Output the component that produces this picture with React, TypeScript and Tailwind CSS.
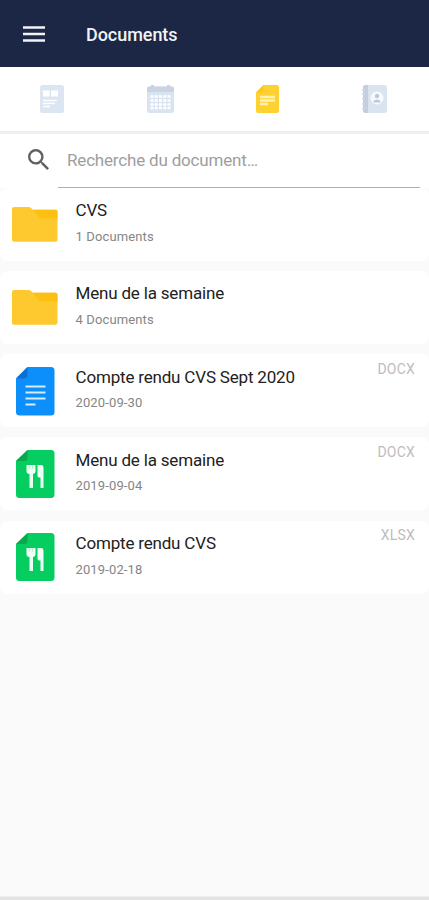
type DocType = "folder" | "doc" | "menu";

type Entry = {
  title: string;
  detail: string;
  type: DocType;
  ext?: string;
};

const entries: Entry[] = [
  { title: "CVS", detail: "1 Documents", type: "folder" },
  { title: "Menu de la semaine", detail: "4 Documents", type: "folder" },
  { title: "Compte rendu CVS Sept 2020", detail: "2020-09-30", type: "doc", ext: "DOCX" },
  { title: "Menu de la semaine", detail: "2019-09-04", type: "menu", ext: "DOCX" },
  { title: "Compte rendu CVS", detail: "2019-02-18", type: "menu", ext: "XLSX" },
];

function FolderIcon() {
  return (
    <svg width="46" height="35" viewBox="0 0 46 35">
      <path d="M2 0h14.500q1.500 0 2.500 1l2 1.800h22.500a2 2 0 0 1 2 2v28a2 2 0 0 1-2 2H2a2 2 0 0 1-2-2V2a2 2 0 0 1 2-2z" fill="#fec92e" />
      <path d="M21 2.800h22.500a2 2 0 0 1 2 2V11.500H30q-2 0-3.500-1.500z" fill="#fdbf12" />
    </svg>
  );
}

function DocIcon() {
  return (
    <svg width="39" height="49" viewBox="0 0 39 49">
      <path d="M11.500 0H35a3.500 3.500 0 0 1 3.500 3.500v41.500a3.500 3.500 0 0 1-3.500 3.500H3.500A3.500 3.500 0 0 1 0 45V11.500z" fill="#0d8ffb" />
      <path d="M11.500 0v8a3.500 3.500 0 0 1-3.500 3.500H0z" fill="#0b70cf" />
      <path d="M9.500 19.500h20M9.500 25.500h20M9.500 31.500h20M9.500 37.500h10" stroke="#d5ecff" strokeWidth="2" />
    </svg>
  );
}

function MenuIcon() {
  return (
    <svg width="39" height="49" viewBox="0 0 39 49">
      <path d="M11.500 0H35a3.500 3.500 0 0 1 3.500 3.500v41a3.500 3.500 0 0 1-3.500 3.500H3.500A3.500 3.500 0 0 1 0 44.500V11z" fill="#06cd5f" />
      <path d="M11.500 0v7.500A3.500 3.500 0 0 1 8 11H0z" fill="#08a94f" />
      <path d="M10.500 15h9v6.500q0 2-2.500 2.500v14h-3.500v-14q-3-.5-3-2.500z" fill="#eefff5" />
      <path d="M13.500 15.500v3.500M16.500 15.500v3.500" stroke="#b9f3d2" strokeWidth="1" />
      <path d="M21.500 15h3.500q2.500 0 2.500 3v20h-3V27.500h-1.500q-1.500 0-1.500-2z" fill="#eefff5" />
    </svg>
  );
}

const icons = {
  folder: <FolderIcon />,
  doc: <DocIcon />,
  menu: <MenuIcon />,
};

function NewsTab() {
  return (
    <svg width="24" height="28" viewBox="0 0 24 28">
      <rect width="24" height="28" rx="2.500" fill="#dce5f2" />
      <path d="M3 5.500h6.500v6H3zM11 5.500h7v6h-7z" fill="#fff" />
      <path d="M3 15.500h14M3 18.500h12M3 21.500h7" stroke="#fff" strokeWidth="1.500" />
    </svg>
  );
}

function CalendarTab() {
  return (
    <svg width="27" height="28" viewBox="0 0 27 28">
      <rect y="1.500" width="27" height="26.500" rx="2.500" fill="#dae4f1" />
      <path d="M0 7V4q0-2.500 2.500-2.500h22Q27 1.500 27 4v3z" fill="#c9d3e2" />
      <path d="M5.500 0v4M21.500 0v4" stroke="#c9d3e2" strokeWidth="3" />
      <path
        d="M3.500 11.500h20M3.500 15.500h20M3.500 19.500h20M3.500 23h20"
        stroke="#fff"
        strokeWidth="2.500"
        strokeDasharray="3 1.250"
      />
    </svg>
  );
}

function NoteTab() {
  return (
    <svg width="23" height="28" viewBox="0 0 23 28">
      <path d="M7.500 0h13A2.500 2.500 0 0 1 23 2.500v23a2.500 2.500 0 0 1-2.500 2.500h-18A2.500 2.500 0 0 1 0 25.500V7.500z" fill="#fdd12f" />
      <path d="M7.500 0v5A2.500 2.500 0 0 1 5 7.500H0z" fill="#f9c922" />
      <path d="M4 12h15M4 15.500h15M4 19h8" stroke="#fff0b5" strokeWidth="2.600" />
    </svg>
  );
}

function ContactTab() {
  return (
    <svg width="25" height="28" viewBox="0 0 25 28">
      <rect x="1" width="24" height="28" rx="2.500" fill="#dae4f1" />
      <path d="M3.500 0H6v28H3.500A2.500 2.500 0 0 1 1 25.500v-23A2.500 2.500 0 0 1 3.500 0z" fill="#c3cfdf" />
      <path d="M0 4.500h3M0 9h3M0 14h3M0 19h3M0 23.500h3" stroke="#cfd9e6" strokeWidth="1.500" />
      <circle cx="15" cy="13" r="6.500" fill="#f7fafd" />
      <circle cx="15" cy="11" r="2.200" fill="#bdc9da" />
      <path d="M11.300 17.500q.5-3 3.700-3t3.700 3z" fill="#bdc9da" />
    </svg>
  );
}

function EntryRow({ entry }: { entry: Entry }) {
  return (
    <li className="flex h-[73px] rounded-lg bg-white pr-[14px]">
      <div className="flex w-[70px] shrink-0 items-center justify-center pt-px">{icons[entry.type]}</div>
      <div className="flex-1 pt-[11.500px] pl-[5.500px]">
        <p className="text-[17px] leading-[22px] tracking-[-0.18px] text-[#212121]">{entry.title}</p>
        <p className="mt-[6.600px] text-[13px] leading-[18px] tracking-[0.13px] text-[#858585]">{entry.detail}</p>
      </div>
      {entry.ext && <span className="pt-[5.500px] text-sm leading-[18px] tracking-[0.2px] text-[#bdbdbd]">{entry.ext}</span>}
    </li>
  );
}

export default function App() {
  return (
    <div className="flex h-[900px] w-[429px] flex-col overflow-hidden bg-[#fafafa] font-['Roboto',sans-serif]">
      <header className="flex h-[67px] shrink-0 items-center bg-[#1c2745] pl-[23px] text-[#f1f3f7]">
        <button aria-label="Menu" className="w-[63px]">
          <svg width="22" height="16" viewBox="0 0 22 16">
            <path d="M0 1.500h22M0 8h22M0 14.500h22" stroke="currentColor" strokeWidth="2.400" />
          </svg>
        </button>
        <h1 className="pt-0.5 text-lg font-medium tracking-[-0.05px]">Documents</h1>
      </header>

      <nav className="flex h-[67px] shrink-0 items-center justify-between border-b-[3px] border-[#efefef] bg-white pr-[42px] pl-10">
        <NewsTab />
        <CalendarTab />
        <NoteTab />
        <ContactTab />
      </nav>

      <div className="flex h-[53.500px] shrink-0 items-stretch bg-white pr-[9px]">
        <div className="flex w-[58px] items-center pb-[3px] pl-7">
          <svg width="21" height="21" viewBox="3 3 17.500 17.500" fill="#616161">
            <path d="M15.500 14h-.79l-.28-.27A6.470 6.470 0 0 0 16 9.500 6.500 6.500 0 1 0 9.500 16c1.610 0 3.090-.59 4.230-1.570l.27.28v.79l5 4.990L20.490 19l-4.990-5zm-6 0C7.010 14 5 11.990 5 9.500S7.010 5 9.500 5 14 7.010 14 9.500 11.990 14 9.500 14z" />
          </svg>
        </div>
        <input
          placeholder="Recherche du document…"
          className="flex-1 border-b border-[#b0b0b0] pl-[9px] text-[17px] tracking-[-0.18px] outline-none placeholder:text-[#9e9e9e]"
        />
      </div>

      <ul className="flex flex-1 flex-col gap-[10.300px]">
        {entries.map((entry) => (
          <EntryRow key={entry.detail} entry={entry} />
        ))}
      </ul>

      <div className="h-1 shrink-0 border-t border-[#eeeeee] bg-[#e2e2e2]" />
    </div>
  );
}
